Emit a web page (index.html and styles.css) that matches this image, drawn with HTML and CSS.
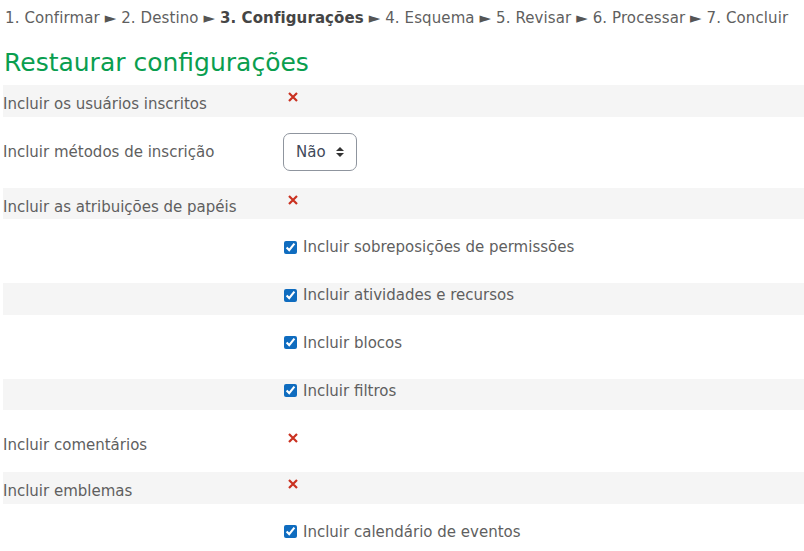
FILE: index.html
```html
<!DOCTYPE html>
<html lang="pt">
<head>
<meta charset="utf-8">
<title>Restaurar configurações</title>
<link rel="stylesheet" href="styles.css">
</head>
<body>
<div class="page">
  <div class="steps">1. Confirmar <span class="tri">►</span> 2. Destino <span class="tri">►</span> <strong>3. Configurações</strong> <span class="tri">►</span> 4. Esquema <span class="tri">►</span> 5. Revisar <span class="tri">►</span> 6. Processar <span class="tri">►</span> 7. Concluir</div>
  <h2 class="title">Restaurar configurações</h2>

  <div class="row stripe">
    <div class="label">Incluir os usuários inscritos</div>
    <div class="field"><svg class="no" viewBox="0 0 10 10"><path d="M1 1L9 9M9 1L1 9"/></svg></div>
  </div>

  <div class="row plain">
    <div class="label">Incluir métodos de inscrição</div>
    <div class="field"><span class="select">Não <svg class="caret" viewBox="0 0 8 10"><path d="M0 4L4 0L8 4ZM0 6L8 6L4 10Z"/></svg></span></div>
  </div>

  <div class="row stripe">
    <div class="label">Incluir as atribuições de papéis</div>
    <div class="field"><svg class="no" viewBox="0 0 10 10"><path d="M1 1L9 9M9 1L1 9"/></svg></div>
  </div>

  <div class="row plain">
    <div class="label"></div>
    <div class="field"><label class="check"><input type="checkbox" checked> Incluir sobreposições de permissões</label></div>
  </div>

  <div class="row stripe">
    <div class="label"></div>
    <div class="field"><label class="check"><input type="checkbox" checked> Incluir atividades e recursos</label></div>
  </div>

  <div class="row plain">
    <div class="label"></div>
    <div class="field"><label class="check"><input type="checkbox" checked> Incluir blocos</label></div>
  </div>

  <div class="row stripe">
    <div class="label"></div>
    <div class="field"><label class="check"><input type="checkbox" checked> Incluir filtros</label></div>
  </div>

  <div class="row plain">
    <div class="label">Incluir comentários</div>
    <div class="field"><svg class="no" viewBox="0 0 10 10"><path d="M1 1L9 9M9 1L1 9"/></svg></div>
  </div>

  <div class="row stripe">
    <div class="label">Incluir emblemas</div>
    <div class="field"><svg class="no" viewBox="0 0 10 10"><path d="M1 1L9 9M9 1L1 9"/></svg></div>
  </div>

  <div class="row plain">
    <div class="label"></div>
    <div class="field"><label class="check"><input type="checkbox" checked> Incluir calendário de eventos</label></div>
  </div>
</div>
</body>
</html>
```

FILE: styles.css
```css
html, body {
  margin: 0;
  padding: 0;
  background: #ffffff;
}
body {
  font-family: "DejaVu Sans", "Liberation Sans", sans-serif;
  font-size: 15px;
  color: #5f5f5f;
  overflow: hidden;
}
.page {
  margin-left: 3px;
}
.steps {
  padding: 6px 0 0 2px;
  line-height: 24px;
  white-space: nowrap;
  letter-spacing: 0.1px;
}
.steps strong {
  color: #454545;
  font-weight: bold;
}
.tri {
  color: #555;
  font-size: 15px;
}
.title {
  margin: 14px 0 0 1px;
  font-weight: normal;
  font-size: 25px;
  line-height: 38px;
  color: #0a9e4f;
  height: 41px;
}
.row {
  display: flex;
  align-items: flex-start;
}
.stripe {
  background: #f5f5f5;
  min-height: 31.6px;
}
.plain {
  padding: 16px 0 15px;
}
.label {
  width: 281px;
  flex: none;
  padding-top: 7px;
  line-height: 24px;
  min-height: 24px;
}
.field {
  line-height: 24px;
  display: flex;
  align-items: center;
}
.no {
  width: 10px;
  height: 10px;
  margin: 7px 0 0 4px;
  stroke: #ca3120;
  stroke-width: 2.2;
  fill: none;
}
.select {
  display: inline-flex;
  align-items: center;
  gap: 10px;
  height: 38px;
  box-sizing: border-box;
  padding: 0 12px;
  border: 1px solid #8f959e;
  border-radius: 7px;
  color: #3f4a5a;
  margin: 0 0 2px -1px;
}
.caret {
  width: 8px;
  height: 10px;
  fill: #333;
}
.check {
  display: flex;
  align-items: center;
  gap: 6px;
}
.plain .check {
  padding-bottom: 9px;
}
.check input {
  margin: 0;
  width: 13px;
  height: 13px;
  accent-color: #0f6cbf;
}
```
